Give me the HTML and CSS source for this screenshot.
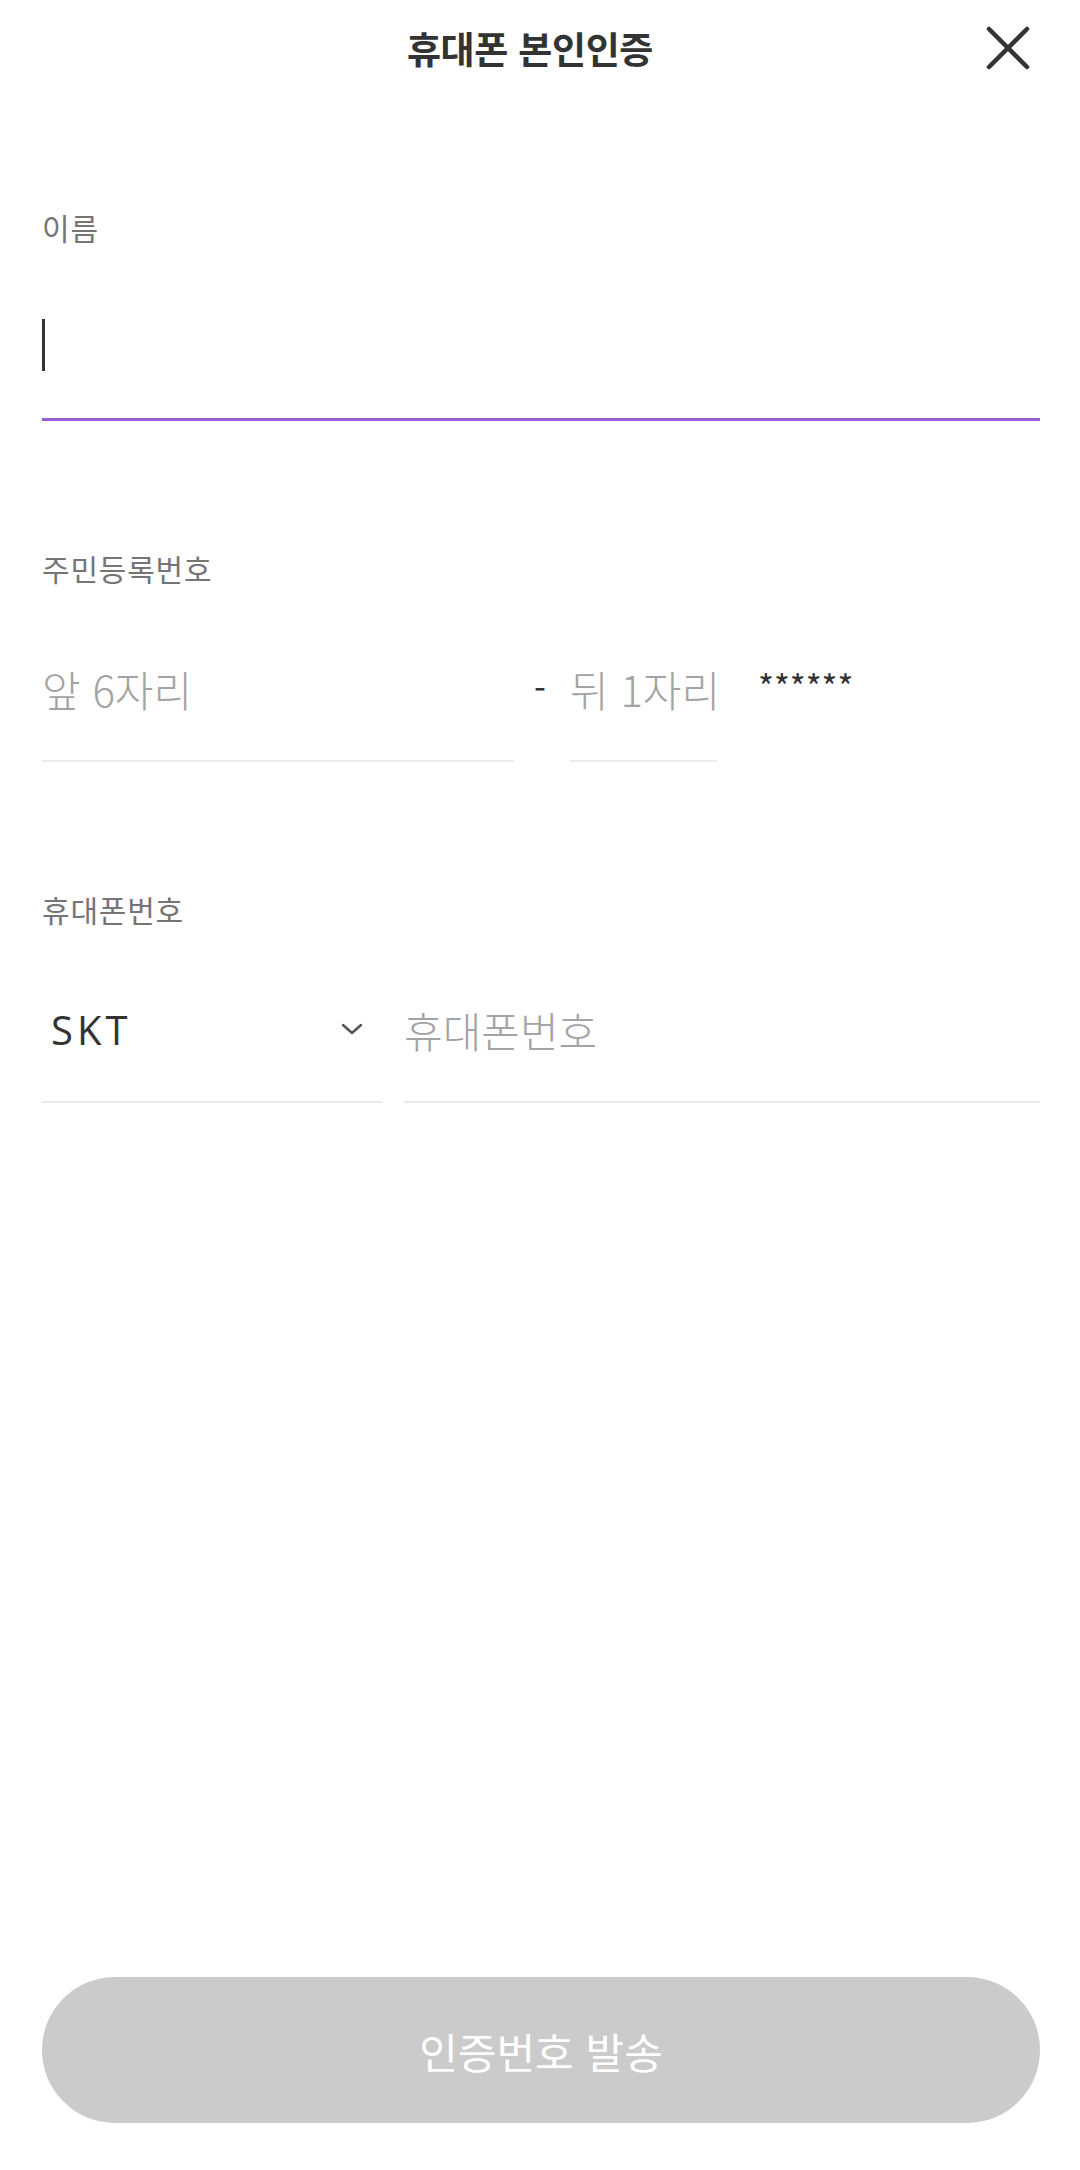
FILE: index.html
```html
<!DOCTYPE html>
<html lang="ko">
<head>
  <meta charset="UTF-8">
  <title>휴대폰 본인인증</title>
  <link rel="stylesheet" href="styles.css">
</head>
<body>

  <div class="page">
    <header class="top-bar">
      <span></span>
      <h1 class="title">휴대폰 본인인증</h1>
      <button class="close-btn" aria-label="닫기">
        <svg width="44" height="44" viewBox="0 0 44 44">
          <line x1="3" y1="3" x2="41" y2="41" />
          <line x1="41" y1="3" x2="3" y2="41" />
        </svg>
      </button>
    </header>

    <main class="form">
      <div class="field">
        <label class="field-label" for="name">이름</label>
        <div class="input-wrap">
          <input type="text" id="name" class="text-input is-focused" />
          <span class="caret"></span>
        </div>
      </div>

      <div class="field">
        <label class="field-label" for="ssn-front">주민등록번호</label>
        <div class="ssn-row">
          <input type="text" id="ssn-front" class="text-input ssn-front" placeholder="앞 6자리" />
          <span class="dash">-</span>
          <input type="text" id="ssn-back" class="text-input ssn-back" placeholder="뒤 1자리" />
          <span class="mask">******</span>
        </div>
      </div>

      <div class="field">
        <label class="field-label" for="phone">휴대폰번호</label>
        <div class="phone-row">
          <div class="carrier-select">
            <span class="carrier-name">SKT</span>
            <svg class="chevron" width="22" height="14" viewBox="0 0 22 14">
              <polyline points="2,3 11,11 20,3" />
            </svg>
          </div>
          <input type="tel" id="phone" class="text-input phone-input" placeholder="휴대폰번호" />
        </div>
      </div>
    </main>

    <button class="send-btn" disabled>인증번호 발송</button>
  </div>

</body>
</html>
```

FILE: styles.css
```css
* {
  box-sizing: border-box;
  margin: 0;
  padding: 0;
}

body {
  font-family: "Noto Sans CJK KR", "Noto Sans", sans-serif;
  background: #fff;
  color: #333;
}

.page {
  min-height: 100vh;
  padding: 0 40px 47px 42px;
  display: flex;
  flex-direction: column;
}

/* header */
.top-bar {
  height: 96px;
  display: grid;
  grid-template-columns: 1fr auto 1fr;
  align-items: center;
}

.title {
  font-size: 37px;
  font-weight: 700;
  color: #333;
  padding-right: 22px;
  letter-spacing: -0.3px;
}

.close-btn {
  justify-self: end;
  margin-right: 10px;
  width: 44px;
  height: 44px;
  border: none;
  background: none;
  cursor: pointer;
}

.close-btn svg {
  display: block;
  stroke: #333;
  stroke-width: 4.5;
  stroke-linecap: round;
}

/* form */
.form {
  flex: 1;
  padding-top: 111px;
}

.field + .field {
  margin-top: 127px;
}

.field-label {
  display: block;
  font-size: 30px;
  line-height: 40px;
  letter-spacing: 0.8px;
  color: #757575;
}

.input-wrap {
  position: relative;
  margin-top: 71px;
}

.text-input {
  display: block;
  width: 100%;
  min-width: 0;
  height: 103px;
  padding: 0 0 43px 0;
  border: none;
  border-bottom: 2px solid #ebebeb;
  outline: none;
  background: transparent;
  font-family: inherit;
  font-size: 42px;
  font-weight: 300;
  line-height: 58px;
  color: #333;
}

.text-input::placeholder {
  color: #a3a3a3;
}

.text-input.is-focused {
  border-bottom: 3px solid #9b5dd6;
}

.caret {
  position: absolute;
  left: 0;
  top: 1px;
  width: 3px;
  height: 52px;
  background: #333;
}

.ssn-row,
.phone-row {
  display: flex;
  align-items: flex-start;
  margin-top: 71px;
}

.ssn-front {
  width: 472px;
}

.dash {
  width: 56px;
  padding-right: 4px;
  text-align: center;
  font-size: 34px;
  line-height: 58px;
  color: #333;
}

.ssn-back {
  width: 147px;
}

.mask {
  margin-left: 41px;
  padding-top: 7px;
  font-size: 34px;
  line-height: 40px;
  color: #333;
}

.carrier-select {
  width: 340px;
  height: 103px;
  padding: 0 19px 43px 9px;
  border-bottom: 2px solid #ebebeb;
  display: flex;
  align-items: center;
  justify-content: space-between;
}

.carrier-name {
  font-family: "Open Sans", "Noto Sans", sans-serif;
  font-size: 40px;
  letter-spacing: 4px;
  color: #333;
}

.chevron {
  fill: none;
  stroke: #555;
  stroke-width: 2.5;
  stroke-linecap: round;
  stroke-linejoin: round;
}

.phone-input {
  flex: 1;
  width: auto;
  margin-left: 22px;
}

/* bottom button */
.send-btn {
  width: 100%;
  height: 146px;
  border: none;
  border-radius: 73px;
  background: #cbcbcb;
  color: #fff;
  font-family: inherit;
  font-size: 42px;
  font-weight: 400;
}
```
